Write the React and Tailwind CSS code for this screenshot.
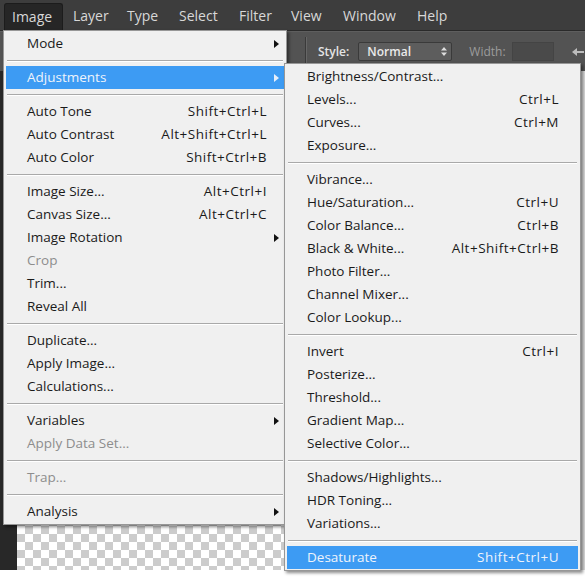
import React from 'react';

const font = { fontFamily: '"Open Sans", "Noto Sans", sans-serif' };

const mainMenu = [
  { label: 'Mode', sub: true },
  'sep',
  { label: 'Adjustments', sub: true, active: true },
  'sep',
  { label: 'Auto Tone', key: 'Shift+Ctrl+L' },
  { label: 'Auto Contrast', key: 'Alt+Shift+Ctrl+L' },
  { label: 'Auto Color', key: 'Shift+Ctrl+B' },
  'sep',
  { label: 'Image Size...', key: 'Alt+Ctrl+I' },
  { label: 'Canvas Size...', key: 'Alt+Ctrl+C' },
  { label: 'Image Rotation', sub: true },
  { label: 'Crop', disabled: true },
  { label: 'Trim...' },
  { label: 'Reveal All' },
  'sep',
  { label: 'Duplicate...' },
  { label: 'Apply Image...' },
  { label: 'Calculations...' },
  'sep',
  { label: 'Variables', sub: true },
  { label: 'Apply Data Set...', disabled: true },
  'sep',
  { label: 'Trap...', disabled: true },
  'sep',
  { label: 'Analysis', sub: true },
];

const adjustMenu = [
  { label: 'Brightness/Contrast...' },
  { label: 'Levels...', key: 'Ctrl+L' },
  { label: 'Curves...', key: 'Ctrl+M' },
  { label: 'Exposure...' },
  'sep',
  { label: 'Vibrance...' },
  { label: 'Hue/Saturation...', key: 'Ctrl+U' },
  { label: 'Color Balance...', key: 'Ctrl+B' },
  { label: 'Black & White...', key: 'Alt+Shift+Ctrl+B' },
  { label: 'Photo Filter...' },
  { label: 'Channel Mixer...' },
  { label: 'Color Lookup...' },
  'sep',
  { label: 'Invert', key: 'Ctrl+I' },
  { label: 'Posterize...' },
  { label: 'Threshold...' },
  { label: 'Gradient Map...' },
  { label: 'Selective Color...' },
  'sep',
  { label: 'Shadows/Highlights...' },
  { label: 'HDR Toning...' },
  { label: 'Variations...' },
  'sep',
  { label: 'Desaturate', key: 'Shift+Ctrl+U', active: true },
];

const menuBar = [
  { label: 'Image', w: 'w-[59px] pl-[7px]', open: true },
  { label: 'Layer', w: 'w-[54px] pl-[10px]' },
  { label: 'Type', w: 'w-[52px] pl-[10px]' },
  { label: 'Select', w: 'w-[60px] pl-[10px]' },
  { label: 'Filter', w: 'w-[52px] pl-[10px]' },
  { label: 'View', w: 'w-[52px] pl-[10px]' },
  { label: 'Window', w: 'w-[74px] pl-[10px]' },
  { label: 'Help', w: 'w-[60px] pl-[10px]' },
];

const Arrow = ({ light }) => (
  <svg width="5" height="8" viewBox="0 0 5 8">
    <path d="M0 0 L5 4 L0 8 Z" fill={light ? '#e6eefa' : '#111'} />
  </svg>
);

const Menu = ({ items, slot, indent }) => (
  <div className="flex flex-col py-[1px] px-[2px] bg-[#f0f0f0] border border-[#979797] shadow-[2px_2px_3px_rgba(0,0,0,0.45)]">
    {items.map((it, i) =>
      it === 'sep' ? (
        <div key={i} className="h-[11px] flex items-center px-[1px]">
          <div className="w-full border-t border-[#a9a9a9] border-b border-b-white" />
        </div>
      ) : (
        <div
          key={i}
          className={`h-[23px] flex items-center ${indent} text-[13.5px] ${
            it.active ? 'bg-[#3d9bf3] text-[#eef3fb]' : it.disabled ? 'text-[#8d8d8d]' : 'text-[#1a1a1a]'
          }`}
        >
          <span className="flex-1">{it.label}</span>
          {it.key && <span className="tracking-[0.5px]">{it.key}</span>}
          <span className={`${slot} flex items-center justify-start pl-[7px]`}>
            {it.sub && <Arrow light={it.active} />}
          </span>
        </div>
      )
    )}
  </div>
);

export default function App() {
  return (
    <div className="relative w-[585px] h-[579px] overflow-hidden bg-white" style={font}>
      {/* menu bar */}
      <div className="h-[31px] bg-[#3d3d3d] flex items-end pl-[4px] border-b border-[#2a2a2a]">
        {menuBar.map((m) => (
          <div
            key={m.label}
            className={`${m.w} h-[27px] flex items-center pb-[2px] text-[14px] text-[#d8d8d8] ${
              m.open ? 'bg-[#262626] rounded-t-[3px] border border-b-0 border-[#1c1c1c]' : ''
            }`}
          >
            {m.label}
          </div>
        ))}
      </div>

      {/* options bar */}
      <div className="h-[40px] bg-[#535353] border-t border-[#5e5e5e] flex items-center pl-[305px]">
        <div className="w-[2px] h-[30px] border-l border-[#3a3a3a] border-r border-r-[#666]" />
        <span className="ml-[11px] text-[12px] font-semibold text-[#e4e4e4]">Style:</span>
        <div className="ml-[9px] w-[94px] h-[19px] rounded-[2px] bg-[#5d5d5d] border border-[#3a3a3a] flex items-center pl-[8px] pr-[4px] text-[12px] font-semibold text-[#eaeaea]">
          <span className="flex-1">Normal</span>
          <svg width="6" height="9" viewBox="0 0 6 9">
            <path d="M0 3.5 L3 0 L6 3.5 Z M0 5.5 L3 9 L6 5.5 Z" fill="#ddd" />
          </svg>
        </div>
        <span className="ml-[17px] text-[12px] text-[#9c9c9c]">Width:</span>
        <div className="ml-[6px] w-[42px] h-[19px] bg-[#4a4a4a] border border-[#444]" />
        <svg className="ml-[18px]" width="12" height="10" viewBox="0 0 12 10">
          <path d="M0 5 L5 1 L5 4 L12 4 L12 6 L5 6 L5 9 Z" fill="#bdbdbd" />
        </svg>
      </div>

      {/* work area */}
      <div className="flex items-end h-[499px] bg-[#282828]">
        <div className="w-[17px]" />
        <div className="w-[563px] h-[60px] bg-[conic-gradient(#cccccc_90deg,#ffffff_90deg_180deg,#cccccc_180deg_270deg,#ffffff_270deg)] bg-[length:16px_16px]" />
        <div className="flex-1 h-full bg-[#dcdcdc]" />
      </div>

      {/* Image menu */}
      <div className="absolute left-[3px] top-[30px] w-[284px]">
        <Menu items={mainMenu} slot="w-[17px]" indent="pl-[21px]" />
      </div>

      {/* Adjustments submenu */}
      <div className="absolute left-[284px] top-[63px] w-[297px]">
        <Menu items={adjustMenu} slot="w-[19px]" indent="pl-[20px]" />
      </div>
    </div>
  );
}
